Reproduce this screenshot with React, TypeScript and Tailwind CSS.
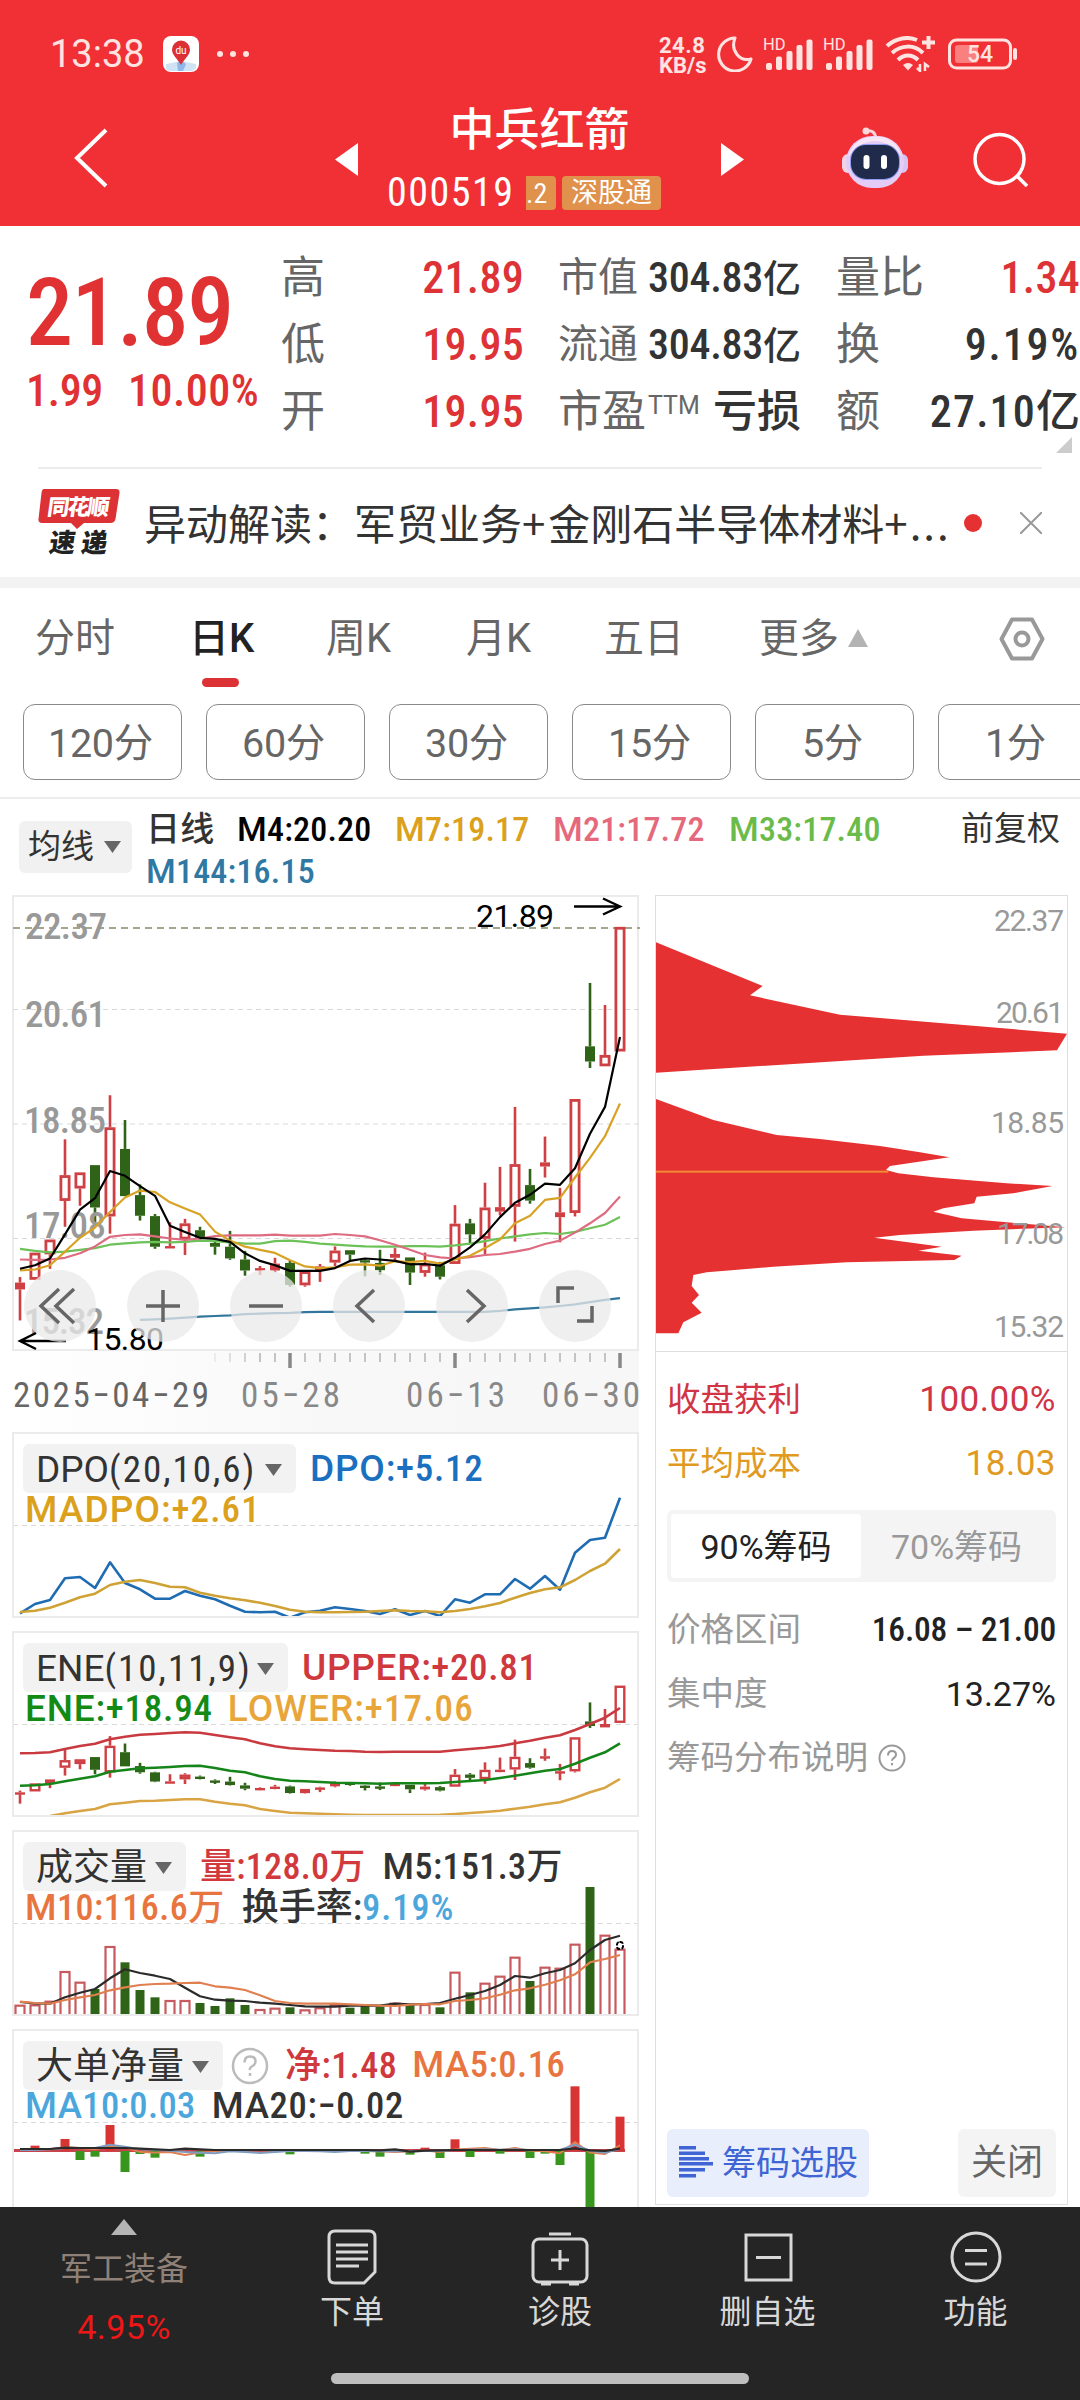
import type { ReactNode } from "react";

const RED = "#e53131";
const CANDLE_RED = "#cf4044";
const CANDLE_GREEN = "#2f6418";

const pitchX = (i: number) => 20 + i * 15;

const toPoints = (values: number[], y: (v: number) => number, start = 0) =>
  values.map((v, i) => `${pitchX(i + start)},${y(v).toFixed(1)}`).join(" ");

// kind, high, body top, body bottom, low
type Candle = ["r" | "g" | "x", number, number, number, number];

const candles: Candle[] = [
  ["x", 1124, 1140, 1160, 1250],
  ["r", 1053, 1053, 1132, 1132],
  ["r", 1015, 1015, 1058, 1100],
  ["r", 724, 828, 903, 978],
  ["r", 820, 820, 867, 917],
  ["g", 799, 799, 922, 965],
  ["r", 596, 689, 948, 998],
  ["g", 668, 752, 889, 889],
  ["g", 855, 886, 946, 960],
  ["g", 941, 947, 1036, 1042],
  ["x", 965, 1034, 1041, 1041],
  ["r", 955, 968, 1015, 1060],
  ["g", 978, 988, 1010, 1015],
  ["g", 1015, 1025, 1036, 1059],
  ["g", 990, 1036, 1070, 1074],
  ["g", 1048, 1073, 1105, 1120],
  ["x", 1092, 1098, 1105, 1118],
  ["x", 1068, 1085, 1105, 1110],
  ["g", 1075, 1083, 1147, 1152],
  ["r", 1107, 1107, 1148, 1152],
  ["x", 1086, 1093, 1105, 1138],
  ["r", 1035, 1047, 1082, 1092],
  ["g", 1046, 1046, 1059, 1076],
  ["g", 1070, 1075, 1082, 1122],
  ["g", 1045, 1083, 1104, 1118],
  ["x", 1040, 1057, 1068, 1080],
  ["g", 1067, 1067, 1111, 1147],
  ["r", 1053, 1085, 1112, 1123],
  ["g", 1080, 1090, 1123, 1131],
  ["r", 915, 969, 1086, 1086],
  ["g", 955, 968, 1000, 1027],
  ["r", 850, 922, 1013, 1057],
  ["x", 804, 921, 934, 945],
  ["r", 630, 796, 920, 1021],
  ["g", 810, 857, 902, 911],
  ["x", 716, 791, 803, 835],
  ["x", 865, 936, 950, 1023],
  ["r", 607, 607, 938, 948],
  ["g", 270, 454, 498, 517],
  ["r", 334, 479, 512, 512],
  ["r", 107, 107, 469, 469],
];

const ma4 = [1100, 1090, 1070, 1000, 928, 895, 816, 830, 860, 888, 975, 993, 1010, 1013, 1022, 1055, 1077, 1090, 1106, 1106, 1106, 1098, 1077, 1070, 1073, 1077, 1087, 1086, 1091, 1068, 1038, 1000, 950, 908, 885, 853, 856, 808, 708, 630, 427];
const ma7 = [1105, 1102, 1090, 1050, 1010, 980, 935, 893, 873, 877, 907, 925, 942, 992, 1018, 1036, 1045, 1054, 1075, 1093, 1098, 1096, 1088, 1087, 1091, 1078, 1081, 1077, 1085, 1073, 1062, 1040, 1015, 968, 946, 900, 894, 835, 778, 715, 620];
const ma21 = [1073, 1074, 1073, 1068, 1055, 1035, 1007, 1002, 1000, 1006, 1012, 1016, 1012, 1005, 1003, 1003, 1003, 1001, 1004, 1004, 1004, 999, 1002, 1006, 1017, 1030, 1045, 1060, 1067, 1070, 1066, 1060, 1057, 1050, 1042, 1028, 1018, 995, 968, 938, 890];
const ma33 = [1042, 1048, 1052, 1050, 1045, 1040, 1030, 1026, 1023, 1022, 1023, 1022, 1018, 1020, 1023, 1027, 1027, 1020, 1018, 1022, 1027, 1030, 1033, 1035, 1036, 1036, 1034, 1034, 1036, 1032, 1027, 1020, 1012, 1006, 1000, 996, 999, 993, 982, 972, 950];
const ma144 = [1248, 1247, 1245, 1242, 1239, 1237, 1235, 1232, 1230, 1229, 1228, 1226, 1225, 1225, 1225, 1225, 1225, 1225, 1225, 1225, 1225, 1225, 1225, 1225, 1222, 1218, 1215, 1212, 1208, 1203, 1197, 1190, 1185];

const dpo = [580, 552, 540, 475, 471, 504, 427, 489, 508, 536, 536, 513, 527, 538, 557, 575, 577, 575, 593, 577, 572, 562, 567, 573, 582, 568, 585, 573, 588, 538, 548, 523, 523, 477, 506, 468, 509, 398, 360, 353, 233];
const madpo = [576, 572, 563, 548, 532, 521, 495, 485, 480, 489, 500, 502, 518, 527, 535, 541, 548, 558, 569, 575, 577, 577, 576, 575, 573, 571, 573, 574, 577, 573, 567, 559, 549, 533, 519, 508, 502, 480, 453, 431, 387];

const eneUpper = [1000, 999, 997, 987, 978, 971, 958, 950, 944, 942, 939, 937, 938, 945, 952, 958, 970, 979, 985, 988, 990, 992, 993, 995, 996, 995, 995, 995, 995, 991, 987, 983, 978, 970, 962, 953, 946, 930, 912, 893, 864];
const eneMid = [1097, 1096, 1092, 1084, 1076, 1069, 1055, 1050, 1045, 1043, 1041, 1038, 1037, 1044, 1052, 1057, 1069, 1077, 1082, 1084, 1086, 1088, 1089, 1090, 1091, 1090, 1090, 1090, 1089, 1086, 1083, 1080, 1074, 1067, 1060, 1052, 1047, 1031, 1013, 997, 970];
const eneLower = [1190, 1190, 1188, 1180, 1173, 1167, 1153, 1148, 1143, 1142, 1140, 1138, 1138, 1145, 1151, 1156, 1167, 1173, 1178, 1180, 1181, 1183, 1184, 1185, 1185, 1185, 1185, 1185, 1184, 1182, 1179, 1176, 1172, 1166, 1160, 1153, 1147, 1133, 1117, 1103, 1077];

const volume = [554, 553, 542, 453, 485, 507, 378, 427, 510, 532, 540, 540, 549, 558, 535, 555, 567, 563, 562, 568, 562, 552, 563, 557, 560, 548, 555, 552, 562, 455, 517, 488, 467, 410, 483, 440, 443, 371, 201, 344, 386];
const volumeDown = [5, 7, 8, 9, 12, 13, 14, 15, 18, 22, 23, 24, 26, 28, 30, 34, 38];
const vol5 = [546, 550, 551, 532, 518, 507, 475, 448, 459, 467, 477, 503, 529, 539, 542, 543, 548, 551, 555, 559, 560, 560, 557, 556, 557, 551, 553, 552, 549, 536, 525, 513, 495, 468, 473, 460, 450, 430, 390, 360, 347];
const vol10 = [545, 549, 551, 540, 532, 525, 511, 502, 495, 492, 491, 489, 488, 499, 503, 510, 526, 543, 549, 551, 551, 551, 553, 555, 557, 558, 554, 552, 553, 543, 540, 535, 524, 511, 505, 494, 481, 463, 427, 417, 405];

const netFlow: [number, number][] = [
  [1, 977], [3, 957], [4, 1020], [5, 1010], [6, 915], [7, 1056], [8, 1002], [9, 1013], [12, 1010], [18, 1003],
  [23, 1001], [24, 1010], [26, 1004], [27, 983], [28, 1014], [29, 958], [30, 1011], [32, 1001], [34, 1014],
  [35, 1001], [36, 1035], [37, 799], [38, 1175], [40, 890],
];
const net5 = [988, 988, 987, 982, 984, 988, 978, 983, 996, 998, 996, 1005, 998, 994, 992, 992, 991, 991, 993, 992, 992, 992, 992, 993, 994, 996, 994, 992, 996, 988, 986, 984, 990, 984, 992, 994, 1000, 966, 998, 1002, 976];
const net10 = [990, 990, 988, 984, 984, 984, 974, 980, 988, 990, 992, 996, 998, 1000, 994, 996, 999, 996, 993, 993, 994, 996, 993, 993, 994, 994, 994, 993, 993, 990, 989, 988, 989, 988, 990, 990, 990, 974, 992, 998, 986];
const net20 = [987, 987, 987, 983, 984, 984, 984, 984, 986, 988, 990, 986, 988, 990, 990, 990, 990, 990, 990, 990, 990, 990, 990, 990, 991, 988, 995, 992, 991, 990, 990, 990, 990, 990, 990, 990, 990, 985, 991, 993, 986];

const chipsHigh = "48,157 368,288 330,316 600,374 1281,431 1251,481 850,497 48,548";
const chipsLow =
  "48,627 220,690 410,735 540,747 720,768 840,787 928,802 750,828 738,840 775,850 880,862 1100,880 1238,888 1120,910 1010,920 1003,940 910,955 880,965 965,985 1277,1012 1000,1022 780,1035 703,1043 905,1070 835,1082 965,1097 943,1110 620,1117 400,1130 200,1147 160,1155 155,1188 177,1215 155,1238 185,1268 130,1297 115,1330 48,1330";

const mainY = (v: number) => 890 + v / 2.904;
const dpoY = (v: number) => 1420 + v / 3;
const eneCandleY = (v: number) => 1420 + (797 + (v - 108) * 0.31) / 3;
const volY = (v: number) => 1820 + v / 3;

function Candles({ y, stroke }: { y: (v: number) => number; stroke: number }) {
  return (
    <g>
      {candles.map(([kind, high, top, bottom, low], i) => {
        const x = pitchX(i);
        const t = y(top);
        const b = y(bottom);
        const color = kind === "g" ? CANDLE_GREEN : CANDLE_RED;
        const hollow = kind === "r" && b - t > stroke * 2;
        return (
          <g key={i}>
            <rect x={x - 1.3} y={y(high)} width={2.6} height={t - y(high)} fill={color} />
            <rect x={x - 1.3} y={b} width={2.6} height={y(low) - b} fill={color} />
            {hollow ? (
              <rect
                x={x - 5.5 + stroke / 2}
                y={t + stroke / 2}
                width={11 - stroke}
                height={b - t - stroke}
                fill="#fff"
                stroke={color}
                strokeWidth={stroke}
              />
            ) : (
              <rect x={x - 5} y={t} width={10} height={Math.max(b - t, 2.4)} fill={color} />
            )}
          </g>
        );
      })}
    </g>
  );
}

function Line({ values, y, color, start = 0, width = 2.2 }: {
  values: number[];
  y: (v: number) => number;
  color: string;
  start?: number;
  width?: number;
}) {
  return <polyline points={toPoints(values, y, start)} fill="none" stroke={color} strokeWidth={width} strokeLinejoin="round" />;
}

function Grid({ y }: { y: number }) {
  return <line x1="13" x2="640" y1={y} y2={y} stroke="#d9d9d9" strokeDasharray="5 4" />;
}

function Caret({ className = "text-[#666]" }: { className?: string }) {
  return (
    <svg viewBox="0 0 17 12" className={`h-3 w-[17px] shrink-0 ${className}`}>
      <path d="M0 0h17L8.500 12z" fill="currentColor" />
    </svg>
  );
}

function Reading({ label, value, className }: { label: string; value: string; className: string }) {
  return (
    <span className={`flex shrink-0 items-center font-medium whitespace-nowrap ${className}`}>
      <span className="font-['Roboto','Noto_Sans_CJK_SC',sans-serif]">{label}</span>
      <span>{value}</span>
    </span>
  );
}

function IndicatorPanel({ top, header, secondRow, children }: {
  top: number;
  header: ReactNode;
  secondRow: ReactNode;
  children: ReactNode;
}) {
  return (
    <section className="relative h-[186px] shrink-0 overflow-hidden border-2 border-[#ebebeb]">
      <svg viewBox={`14 ${top + 2} 623 182`} className="block h-[182px] w-[623px] overflow-visible">
        {children}
      </svg>
      <div className="absolute inset-x-0 top-0 pt-2.5 pl-[9px] text-[37px]">
        <div className="flex h-[49px] items-center">{header}</div>
        <div className="flex h-[33px] items-center pl-0.5 leading-none">{secondRow}</div>
      </div>
    </section>
  );
}

function Picker({ label, params, className }: { label: string; params?: string; className: string }) {
  return (
    <button className={`flex h-[49px] shrink-0 items-center justify-between rounded-md bg-[#f2f2f2] pt-0.5 pr-3.5 pl-[13px] text-[#333] ${className}`}>
      <span className="flex items-center whitespace-nowrap">
        <span className="font-['Roboto','Noto_Sans_CJK_SC',sans-serif]">{label}</span>
        {params && <span className="tracking-[2px]">{params}</span>}
      </span>
      <Caret />
    </button>
  );
}

function StatusBar() {
  return (
    <div className="flex h-[108px] items-center pl-[50px] text-[#ffe3e1]">
      <span className="w-[113px] font-['Roboto'] text-[38px]">13:38</span>
      <svg viewBox="0 0 36 36" className="size-9">
        <rect width="36" height="36" rx="8" fill="#fff" />
        <path d="M3 28l15-3 15 3v4q-2 3-5 3H8q-4 0-5-3z" fill="#cfe3f5" />
        <path d="M14 27l4-3 5 4-3 7h-5z" fill="#8fb8ea" />
        <path d="M18 29C14 22 9 19 9 13.500a9 9 0 0 1 18 0C27 19 22 22 18 29z" fill="#dc2f36" />
        <text x="18" y="17.500" fontSize="10" textAnchor="middle" fill="#fff" fontFamily="Roboto">du</text>
      </svg>
      <svg viewBox="0 0 36 8" className="ml-4 h-2 w-9" fill="currentColor">
        <circle cx="5" cy="4" r="3" />
        <circle cx="18" cy="4" r="3" />
        <circle cx="31" cy="4" r="3" />
      </svg>
      <div className="ml-[408px] w-[58px] pt-1 font-['Roboto'] text-[22px] leading-[20px] font-bold">
        <p className="tracking-[0.5px]">24.8</p>
        <p>KB/s</p>
      </div>
      <svg viewBox="0 0 36 36" className="size-9" fill="none" stroke="currentColor" strokeWidth="3" strokeLinejoin="round">
        <path d="M18 2A16.500 16.500 0 1 0 34 23C23 26 13 15 18 2z" />
      </svg>
      {[0, 1].map((n) => (
        <svg key={n} viewBox="0 0 50 34" className="ml-[10px] h-[34px] w-[50px] overflow-visible" fill="currentColor">
          <text x="0" y="12.500" fontSize="16.500" fontFamily="Roboto">HD</text>
          <rect x="3" y="26" width="6" height="7" rx="2" />
          <rect x="13" y="19.500" width="6" height="13.500" rx="2" />
          <rect x="23.500" y="14" width="6" height="19" rx="2" />
          <rect x="33.500" y="8" width="6" height="25" rx="2" />
          <rect x="43.500" y="2.500" width="6" height="30.500" rx="2" />
        </svg>
      ))}
      <svg viewBox="0 0 50 36" className="ml-[12px] h-9 w-[50px]" fill="none" stroke="currentColor" strokeWidth="4">
        <path d="M2 10C11 2 23 0 32 4M7 17c9-8 22-9 31 0M13 24c6-6 14-6 20 0" />
        <path d="M18 29q5-4 10 0l-5 5.500z" fill="currentColor" stroke="none" />
        <path d="M37 6.500h13M43.500 0v13" />
        <path d="M35 28v7l-3-3M40 35v-7l4 3" strokeWidth="2.500" />
      </svg>
      <svg viewBox="0 0 70 32" className="ml-[13px] h-8 w-[70px]" fill="none" stroke="currentColor" strokeWidth="3">
        <rect x="1.500" y="2" width="61" height="28" rx="7" />
        <rect x="7" y="7" width="23" height="18" rx="3" fill="#f9807f" stroke="none" />
        <rect x="65" y="10" width="4" height="12" rx="2" fill="currentColor" stroke="none" />
        <text x="32" y="24" fontSize="23" textAnchor="middle" fill="currentColor" stroke="none" fontFamily="Roboto" fontWeight="500">54</text>
      </svg>
    </div>
  );
}

function TitleBar() {
  return (
    <div className="flex h-[118px] text-white">
      <svg viewBox="0 0 40 60" className="mt-5 ml-[71px] h-[60px] w-10" fill="none" stroke="currentColor" strokeWidth="4">
        <path d="M35 2L6 30l29 28" />
      </svg>
      <svg viewBox="0 0 23 33" className="mt-[35px] ml-[224px] h-[33px] w-[23px]">
        <path d="M23 0v33L0 16.500z" fill="#fff" />
      </svg>
      <div className="w-[363px]">
        <h1 className="-mt-1 text-center font-['Noto_Sans_CJK_SC'] text-[45px] leading-[46px] font-medium">中兵红箭</h1>
        <div className="mt-[25px] flex h-9 items-center pl-[29px]">
          <span className="w-[139px] text-[40px] tracking-[1.5px]">000519</span>
          <span className="h-[34px] w-[30px] rounded-r-sm bg-[#e0914c] text-[28px] leading-[35px]">.2</span>
          <span className="ml-1.5 h-[34px] w-[99px] rounded-sm bg-[#e0914c] text-center text-[27px] leading-[34px]">深股通</span>
        </div>
      </div>
      <svg viewBox="0 0 23 33" className="mt-[35px] h-[33px] w-[23px]">
        <path d="M0 0v33l23-16.500z" fill="#fff" />
      </svg>
      <svg viewBox="0 0 66 62" className="mt-[19px] ml-[98px] h-[62px] w-[66px]">
        <path d="M24 4q9-2 10 8" fill="none" stroke="#fbd3dc" strokeWidth="3" />
        <circle cx="24" cy="4" r="3.500" fill="#fbd9dd" />
        <rect x="0" y="27" width="12" height="19" rx="6" fill="#f3d4e6" />
        <rect x="54" y="27" width="12" height="19" rx="6" fill="#d9c3f0" />
        <rect x="4" y="9" width="58" height="52" rx="26" fill="#e3cdf6" />
        <path d="M6 30Q12 10 33 9.500T60 30Q48 14 33 14T6 30z" fill="#f8e6f6" />
        <rect x="8" y="17" width="50" height="36" rx="16" fill="#8f9cf0" />
        <rect x="9" y="18" width="48" height="34" rx="15" fill="#202b4b" />
        <rect x="21.500" y="28" width="6" height="14" rx="3" fill="#fff" />
        <rect x="39" y="28" width="6" height="14" rx="3" fill="#fff" />
      </svg>
      <svg viewBox="0 0 56 56" className="mt-6 ml-[65px] size-14" fill="none" stroke="currentColor" strokeWidth="3.500">
        <circle cx="26.500" cy="27" r="24.500" />
        <path d="M44 44l10 10" />
      </svg>
    </div>
  );
}

function QuoteRow({ label, labelClass = "text-[44px]", value, valueClass = "text-[#333]" }: {
  label: ReactNode;
  labelClass?: string;
  value: ReactNode;
  valueClass?: string;
}) {
  return (
    <div className="flex h-[67px] items-center justify-between leading-none whitespace-nowrap">
      <span className={`text-[#666] ${labelClass}`}>{label}</span>
      <span className={`font-medium ${valueClass}`}>{value}</span>
    </div>
  );
}

function Quote() {
  const red = "text-[44px] tracking-[0.3px] text-[#dd3236]";
  const cap = <><span className="tracking-[-0.3px]">304.83</span><span className="text-[38px]">亿</span></>;
  return (
    <section className="relative flex h-[243px] shrink-0">
      <div className="w-[281px] pt-[41px] pl-[26px] font-medium text-[#e03232]">
        <p className="text-[94px] leading-[92px] tracking-[-1.5px]">21.89</p>
        <p className="mt-2.5 flex gap-[25px] text-[44px] leading-[44px]">
          <span className="tracking-[-0.3px]">1.99</span>
          <span className="tracking-[0.5px]">10.00%</span>
        </p>
      </div>
      <div className="w-[243px] pt-[18px]">
        <QuoteRow label="高" value="21.89" valueClass={red} />
        <QuoteRow label="低" value="19.95" valueClass={red} />
        <QuoteRow label="开" value="19.95" valueClass={red} />
      </div>
      <div className="ml-[34px] w-[243px] pt-[18px]">
        <QuoteRow label="市值" labelClass="text-[40px]" value={cap} valueClass="text-[42px] text-[#333]" />
        <QuoteRow label="流通" labelClass="text-[40px]" value={cap} valueClass="text-[42px] text-[#333]" />
        <QuoteRow
          label={<>市盈<sup className="top-[-13px] ml-0.5 font-['Roboto'] text-[25px]">TTM</sup></>}
          value="亏损"
          valueClass="text-[44px] text-[#333]"
        />
      </div>
      <div className="ml-[35px] w-[244px] pt-[18px]">
        <QuoteRow label="量比" value="1.34" valueClass={red} />
        <QuoteRow label="换" value="9.19%" valueClass="text-[44px] tracking-[1.8px] text-[#333]" />
        <QuoteRow label="额" value={<><span className="tracking-[1.2px]">27.10</span>亿</>} valueClass="text-[44px] text-[#333]" />
      </div>
      <svg viewBox="0 0 16 16" className="absolute right-2 bottom-4 size-4">
        <path d="M16 0v16H0z" fill="#ccc" />
      </svg>
    </section>
  );
}

function NewsStrip() {
  return (
    <section className="flex h-[108px] shrink-0 items-center pl-[38px]">
      <div className="w-[106px]">
        <svg viewBox="0 0 82 68" className="h-[68px] w-[82px] overflow-visible">
          <path d="M6 0h72q4 0 3.500 4l-4 26q-1 4-5 4H46l-7 6-6-6H4q-4 0-3.500-4l3-26Q4 0 6 0z" fill="#dc3236" />
          <g fontFamily="'Noto Sans CJK SC'" fontWeight="900" transform="skewX(-8)">
            <text x="12" y="25.500" fontSize="22" textLength="62" fill="#fff">同花顺</text>
            <text x="19" y="63" fontSize="26" textLength="58" fill="#222">速递</text>
          </g>
        </svg>
      </div>
      <p className="w-[820px] text-[42px] whitespace-nowrap text-[#333]">
        异动解读：军贸业务<span className="font-['Noto_Sans_CJK_SC'] tracking-[3px]">+</span>金刚石半导体材料
        <span className="font-['Noto_Sans_CJK_SC'] tracking-[2px]">+...</span>
      </p>
      <span className="size-[18px] rounded-full bg-[#e53131]" />
      <svg viewBox="0 0 22 22" className="ml-[38px] size-[22px]" stroke="#999" strokeWidth="2">
        <path d="M0 0l22 22M22 0L0 22" />
      </svg>
    </section>
  );
}

function Tabs() {
  const tabs: [string, string][] = [
    ["分时", "w-[154px]"],
    ["日K", "w-[137px]"],
    ["周K", "w-[140px]"],
    ["月K", "w-[138px]"],
    ["五日", "w-[155px]"],
    ["更多", "w-[89px]"],
  ];
  return (
    <nav className="flex h-[116px] shrink-0 pt-[21px] pl-[35px] font-['Roboto','Noto_Sans_CJK_SC',sans-serif] text-[40px] text-[#666]">
      {tabs.map(([name, width]) => (
        <div key={name} className={width}>
          {name === "日K" ? (
            <div className="w-fit">
              <p className="leading-[60px] font-medium text-[#222]">{name}</p>
              <div className="mt-[9px] ml-[13px] h-[9px] w-[37px] rounded-full bg-[#dc3236]" />
            </div>
          ) : (
            <p className="leading-[60px]">{name}</p>
          )}
        </div>
      ))}
      <svg viewBox="0 0 20 18" className="mt-5 h-[18px] w-5">
        <path d="M10 0l10 18H0z" fill="#b3b3b3" />
      </svg>
      <svg viewBox="0 0 46 44" className="mt-2 ml-[131px] h-11 w-[46px]" fill="none" stroke="#999" strokeWidth="4" strokeLinejoin="round">
        <path d="M13 2.500h20L43.500 22 33 41.500H13L2.500 22z" />
        <circle cx="23" cy="22" r="6.500" />
      </svg>
    </nav>
  );
}

function PeriodChips() {
  return (
    <div className="flex h-[95px] shrink-0 gap-6 overflow-hidden border-b-2 border-[#ececec] pl-[23px] font-['Roboto','Noto_Sans_CJK_SC',sans-serif]">
      {["120分", "60分", "30分", "15分", "5分", "1分"].map((label) => (
        <button key={label} className="h-[76px] w-[159px] shrink-0 rounded-xl border border-[#8a8a8a] pr-1 text-[39.5px] leading-[77px] tracking-[-0.3px] text-[#666]">
          {label}
        </button>
      ))}
    </div>
  );
}

function AverageRow() {
  return (
    <div className="flex h-[96px] shrink-0 pl-[19px]">
      <button className="mt-[22px] flex h-[52px] w-[113px] items-center justify-between rounded-md bg-[#f1f1f1] pr-[11px] pl-[9px] text-[33px] text-[#333]">
        均线
        <Caret />
      </button>
      <div className="mt-[9px] ml-3.5 w-[795px] text-[34px] leading-[42px] tracking-[0.2px]">
        <div className="flex h-[42px]">
          <span className="w-[91px] font-medium text-[#333]">日线</span>
          <Reading label="M" value="4:20.20" className="w-[158px] text-black" />
          <Reading label="M" value="7:19.17" className="w-[158px] text-[#dba11d]" />
          <Reading label="M" value="21:17.72" className="w-[176px] text-[#e5697d]" />
          <Reading label="M" value="33:17.40" className="text-[#6abb4a]" />
        </div>
        <Reading label="M" value="144:16.15" className="text-[#2f78a4]" />
      </div>
      <span className="mt-[9px] ml-5 text-[33px] leading-[42px] text-[#333]">前复权</span>
    </div>
  );
}

function PriceChart() {
  const labels: [string, number, number, number][] = [
    ["22.37", 25, 939, 82],
    ["20.61", 25, 1027, 81],
    ["18.85", 24, 1133, 82],
    ["17.08", 24, 1238, 82],
    ["15.32", 24, 1334, 80],
  ];
  return (
    <section className="relative h-[456px] shrink-0 border-2 border-[#ebebeb]">
      <svg viewBox="14 897 623 452" className="block h-[452px] w-[623px] overflow-visible">
        <Grid y={1009.5} />
        <Grid y={1124} />
        <Grid y={1238.5} />
        <line x1="13" x2="640" y1="928" y2="928" stroke="#a5a58a" strokeWidth="1.800" strokeDasharray="7 5" />
        <Candles y={mainY} stroke={2.8} />
        <g fontFamily="'Roboto Condensed'" fontSize="37" fontWeight="500" fill="#999">
          {labels.map(([text, x, y, w]) => (
            <text key={text} x={x} y={y} textLength={w}>{text}</text>
          ))}
        </g>
        <Line values={ma144} y={mainY} color="#33769c" start={8} />
        <Line values={ma33} y={mainY} color="#6cc158" />
        <Line values={ma21} y={mainY} color="#dd6c80" />
        <Line values={ma7} y={mainY} color="#d8a225" />
        <Line values={ma4} y={mainY} color="#000" />
        <g fill="none" stroke="#000" strokeWidth="2.400">
          <path d="M574 906.500h45M603 898.500l17 8-17 8" />
          <path d="M66 1341H20M36 1333l-16 8 16 8" />
        </g>
        <g fontFamily="Roboto" fontSize="32" fill="#000">
          <text x="476" y="927" textLength="78">21.89</text>
          <text x="86" y="1350" textLength="78">15.80</text>
        </g>
      </svg>
      <div className="absolute top-[373px] left-[10px] flex gap-[31px] text-[#666]">
        {[
          "M35 19L17 36l18 17M50 19L32 36l18 17",
          "M19 36h34M36 20v32",
          "M19 36h34",
          "M41 20L24 36l17 16",
          "M31 20l17 16-17 16",
          "M19 33V18h16M38 51h15V36",
        ].map((d) => (
          <button key={d} className="size-[72px] rounded-full bg-[#e9e9e9]/75">
            <svg viewBox="0 0 72 72" fill="none" stroke="currentColor" strokeWidth="3.500">
              <path d={d} />
            </svg>
          </button>
        ))}
      </div>
    </section>
  );
}

function DateAxis() {
  const major = [18, 29, 40];
  return (
    <svg viewBox="12 1351 627 81" className="block h-[81px] w-[627px] shrink-0 bg-linear-to-r from-white via-[#f8f8f8] to-[#f7f7f7]">
      {Array.from({ length: 28 }, (_, n) => n + 13).map((i) => (
        <line
          key={i}
          x1={pitchX(i)}
          x2={pitchX(i)}
          y1="1353"
          y2={major.includes(i) ? 1368 : 1362}
          stroke={major.includes(i) ? "#888" : "#c4c4c4"}
          strokeOpacity={Math.min(1, (i - 12) / 4)}
          strokeWidth={major.includes(i) ? 3.5 : 2}
        />
      ))}
      <g fontFamily="'Roboto Condensed'" fontSize="35" fill="#888">
        <text x="13" y="1407" textLength="196" fill="#666">2025−04−29</text>
        <text x="241" y="1407" textLength="99">05−28</text>
        <text x="406" y="1407" textLength="99">06−13</text>
        <text x="542" y="1407" textLength="98">06−30</text>
      </g>
    </svg>
  );
}

function VolumeBars() {
  return (
    <g>
      {volume.map((v, i) => {
        const x = pitchX(i);
        const y = volY(v);
        return volumeDown.includes(i) ? (
          <rect key={i} x={x - 4.5} y={y} width="9" height={2016.5 - y} fill={CANDLE_GREEN} />
        ) : (
          <rect key={i} x={x - 4.5} y={y + 1} width="9" height={2015.5 - y} fill="#fff" stroke="#c75a5e" strokeWidth="2.200" />
        );
      })}
    </g>
  );
}

function ChartColumn() {
  return (
    <div className="flex w-[627px] flex-col">
      <PriceChart />
      <DateAxis />
      <div className="flex flex-col gap-[13px]">
        <IndicatorPanel
          top={1432}
          header={
            <>
              <Picker label="DPO" params="(20,10,6)" className="w-[273px]" />
              <Reading label="DPO" value=":+5.12" className="ml-3.5 tracking-[0.8px] text-[#1b6fc0]" />
            </>
          }
          secondRow={<Reading label="MADPO" value=":+2.61" className="tracking-[1.1px] text-[#dba11d]" />}
        >
          <Grid y={1525.5} />
          <Line values={dpo} y={dpoY} color="#1f6cb3" width={2.6} />
          <Line values={madpo} y={dpoY} color="#cfa235" width={2.6} />
        </IndicatorPanel>

        <IndicatorPanel
          top={1631}
          header={
            <>
              <Picker label="ENE" params="(10,11,9)" className="w-[265px]" />
              <Reading label="UPPER" value=":+20.81" className="ml-3.5 tracking-[0.7px] text-[#cf383d]" />
            </>
          }
          secondRow={
            <>
              <Reading label="ENE" value=":+18.94" className="tracking-[0.8px] text-[#138a13]" />
              <Reading label="LOWER" value=":+17.06" className="ml-[15px] tracking-[1.1px] text-[#e8a63a]" />
            </>
          }
        >
          <Grid y={1724.5} />
          <Candles y={eneCandleY} stroke={2.4} />
          <Line values={eneUpper} y={dpoY} color="#c83a40" width={2.6} />
          <Line values={eneMid} y={dpoY} color="#15851a" width={2.6} />
          <Line values={eneLower} y={dpoY} color="#d9a443" width={2.6} />
        </IndicatorPanel>

        <IndicatorPanel
          top={1830}
          header={
            <>
              <Picker label="成交量" className="w-[163px]" />
              <Reading label="量" value=":128.0万" className="ml-3.5 text-[36px] tracking-[0.3px] text-[#d2393d]" />
              <Reading label="M" value="5:151.3万" className="ml-[17px] text-[36px] tracking-[0.4px] text-[#333]" />
            </>
          }
          secondRow={
            <>
              <Reading label="M" value="10:116.6万" className="text-[36px] tracking-[0.5px] text-[#e8753f]" />
              <Reading label="换手率" value=":" className="ml-[17px] text-[#333]" />
              <Reading label="" value="9.19%" className="text-[36px] tracking-[1.1px] text-[#4ba6dc]" />
            </>
          }
        >
          <Grid y={1923.5} />
          <VolumeBars />
          <Line values={vol5} y={volY} color="#2b2b2b" />
          <Line values={vol10} y={volY} color="#e07f4f" />
          <rect x="617" y="1942" width="6" height="7" rx="2.500" fill="#fff" stroke="#000" strokeWidth="2" strokeDasharray="4 1.500" />
        </IndicatorPanel>

        <IndicatorPanel
          top={2029}
          header={
            <>
              <Picker label="大单净量" className="w-[200px]" />
              <svg viewBox="0 0 38 38" className="ml-2 size-[38px] shrink-0" fill="none" stroke="#bbb" strokeWidth="2.500">
                <circle cx="19" cy="19" r="17" />
                <path d="M13.500 15.500q0-6 5.500-6t5.500 5q0 3-3 4.500t-2.500 4M19 26v3" />
              </svg>
              <Reading label="净" value=":1.48" className="ml-4 text-[36px] tracking-[0.5px] text-[#cf383d]" />
              <Reading label="MA" value="5:0.16" className="ml-[15px] text-[36.500px] tracking-[0.5px] text-[#e8753f]" />
            </>
          }
          secondRow={
            <>
              <Reading label="MA" value="10:0.03" className="text-[36.500px] tracking-[0.4px] text-[#4ba6dc]" />
              <Reading label="MA" value="20:−0.02" className="ml-4 text-[36.500px] tracking-[0.7px] text-[#333]" />
            </>
          }
        >
          <Grid y={2122.5} />
          <rect x="13" y="2149" width="612" height="3" fill="#c9444a" />
          {netFlow.map(([i, v]) => (
            <rect
              key={i}
              x={pitchX(i) - 4.5}
              y={Math.min(volY(v), 2151)}
              width="9"
              height={Math.abs(volY(v) - 2151)}
              fill={v < 992 ? "#d93434" : "#38961f"}
            />
          ))}
          <Line values={net5} y={volY} color="#e07f4f" width={1.8} />
          <Line values={net10} y={volY} color="#7f9cc0" width={2} />
          <Line values={net20} y={volY} color="#2b2b2b" />
        </IndicatorPanel>
      </div>
    </div>
  );
}

function StatRow({ label, value, className, valueClass = "" }: { label: string; value: string; className: string; valueClass?: string }) {
  return (
    <div className={`flex h-16 items-center justify-between text-[33.5px] ${className}`}>
      <span>{label}</span>
      <span className={`font-['Roboto'] ${valueClass}`}>{value}</span>
    </div>
  );
}

function ChipColumn() {
  const labels: [string, number, number][] = [
    ["22.37", 931, 70],
    ["20.61", 1023, 68],
    ["18.85", 1133, 73],
    ["17.08", 1244, 67],
    ["15.32", 1337, 70],
  ];
  return (
    <aside className="ml-4 flex h-[1310px] w-[413px] flex-col border border-[#dedede]">
      <svg viewBox="656 896 411 455" className="block h-[455px] w-[411px] shrink-0">
        <g transform="translate(640 890) scale(0.33333)">
          <polygon points={chipsHigh} fill={RED} />
          <polygon points={chipsLow} fill={RED} />
          <rect x="48" y="842" width="697" height="6" fill="#f28a35" />
        </g>
        <g fontFamily="Roboto" fontSize="30" fill="#999">
          {labels.map(([text, y, w]) => (
            <text key={text} x={1064 - w} y={y} textLength={w}>{text}</text>
          ))}
        </g>
      </svg>
      <div className="flex grow flex-col border-t border-[#dedede] pt-4 pr-[11px] pl-[11px]">
        <StatRow label="收盘获利" value="100.00%" className="text-[#d03445]" valueClass="text-[35px] tracking-[0.5px]" />
        <StatRow label="平均成本" value="18.03" className="text-[#e09a22]" valueClass="text-[35px] tracking-[0.5px]" />
        <div className="mt-3.5 flex h-[72px] rounded-md bg-[#f4f4f4] p-1 text-center font-['Roboto','Noto_Sans_CJK_SC',sans-serif] text-[34px] leading-[66px]">
          <span className="w-[190px] rounded-sm bg-white text-[#222]">90%筹码</span>
          <span className="grow text-[#999]">70%筹码</span>
        </div>
        <div className="mt-4 text-[#999]">
          <StatRow label="价格区间" value="16.08 – 21.00" className="" valueClass="font-stretch-75% font-medium tracking-[-0.2px] text-[#222]" />
          <StatRow label="集中度" value="13.27%" className="" valueClass="text-[34px] text-[#222]" />
          <div className="flex h-16 items-center text-[33.5px]">
            筹码分布说明
            <svg viewBox="0 0 28 28" className="ml-2.5 size-7" fill="none" stroke="#999" strokeWidth="2">
              <circle cx="14" cy="14" r="12.500" />
              <path d="M10 11.500q0-4.500 4-4.500t4 3.500q0 2-2 3.300t-2 3M14 19v2.200" />
            </svg>
          </div>
        </div>
        <div className="mt-auto mb-[7px] flex justify-between text-[34px]">
          <button className="flex h-[68px] w-[202px] items-center rounded-md bg-[#e8eefb] pl-3 text-[#3f64d4]">
            <svg viewBox="0 0 34 34" className="mr-[9px] size-[34px] shrink-0" fill="currentColor">
              <path d="M0 0h17v3.500H0zM0 5.500h26v3.500H0zM0 11h30v3.500H0zM0 16h34v3.500H0zM0 22h26v3.500H0zM0 28h17v3.500H0z" />
            </svg>
            筹码选股
          </button>
          <button className="h-[68px] w-[98px] rounded-md bg-[#f4f4f4] text-[36px] text-[#666]">关闭</button>
        </div>
      </div>
    </aside>
  );
}

function NavItem({ label, className, children }: { label: string; className: string; children: ReactNode }) {
  return (
    <div className={`flex flex-col items-center text-[32px] text-[#d8d8d8] ${className}`}>
      <svg viewBox="0 0 60 60" className="mt-5 size-[60px]" fill="none" stroke="currentColor" strokeWidth="3">
        {children}
      </svg>
      <span className="mt-[5px] leading-10">{label}</span>
    </div>
  );
}

function BottomNav() {
  return (
    <footer className="h-[193px] shrink-0 bg-[#252525]">
      <div className="flex h-[166px]">
        <div className="flex w-[248px] flex-col items-center">
          <svg viewBox="0 0 26 16" className="mt-3 h-4 w-[26px]">
            <path d="M13 0l13 16H0z" fill="#b5b5b5" />
          </svg>
          <span className="mt-3.5 text-[32px] leading-10 text-[#8f8177]">军工装备</span>
          <span className="mt-[18px] font-['Roboto'] text-[34px] leading-10 tracking-[0.5px] text-[#ee1717]">4.95%</span>
        </div>
        <NavItem label="下单" className="w-[208px]">
          <path d="M13 4h34q6 0 6 6v35L42 56H13q-6 0-6-6V10q0-6 6-6zM14 18h32M14 25h32M14 32h32M14 39h23" />
        </NavItem>
        <NavItem label="诊股" className="w-[208px]">
          <rect x="3" y="12" width="54" height="43" rx="6" />
          <path d="M19 7h22M30 23v20M21 33h18M11 57h10M39 57h10" />
        </NavItem>
        <NavItem label="删自选" className="w-[207px]">
          <path d="M8 8h45v45H8zM18 30.500h25" />
        </NavItem>
        <NavItem label="功能" className="w-[209px]">
          <circle cx="30" cy="30" r="24" />
          <path d="M19 23.500h22M19 37h22" />
        </NavItem>
      </div>
      <div className="mx-auto h-[11px] w-[418px] rounded-full bg-[#bfbfbf]" />
    </footer>
  );
}

export default function App() {
  return (
    <main className="flex h-[2400px] w-[1080px] flex-col overflow-hidden bg-white font-['Roboto_Condensed','Noto_Sans_CJK_SC',sans-serif]">
      <header className="h-[226px] shrink-0 bg-[#f13036]">
        <StatusBar />
        <TitleBar />
      </header>
      <Quote />
      <div className="mx-[38px] -mt-0.5 h-0.5 shrink-0 bg-[#ececec]" />
      <NewsStrip />
      <div className="h-[11px] shrink-0 bg-[#f3f3f3]" />
      <Tabs />
      <PeriodChips />
      <AverageRow />
      <div className="flex h-[1312px] shrink-0 overflow-hidden pl-3">
        <ChartColumn />
        <ChipColumn />
      </div>
      <BottomNav />
    </main>
  );
}
